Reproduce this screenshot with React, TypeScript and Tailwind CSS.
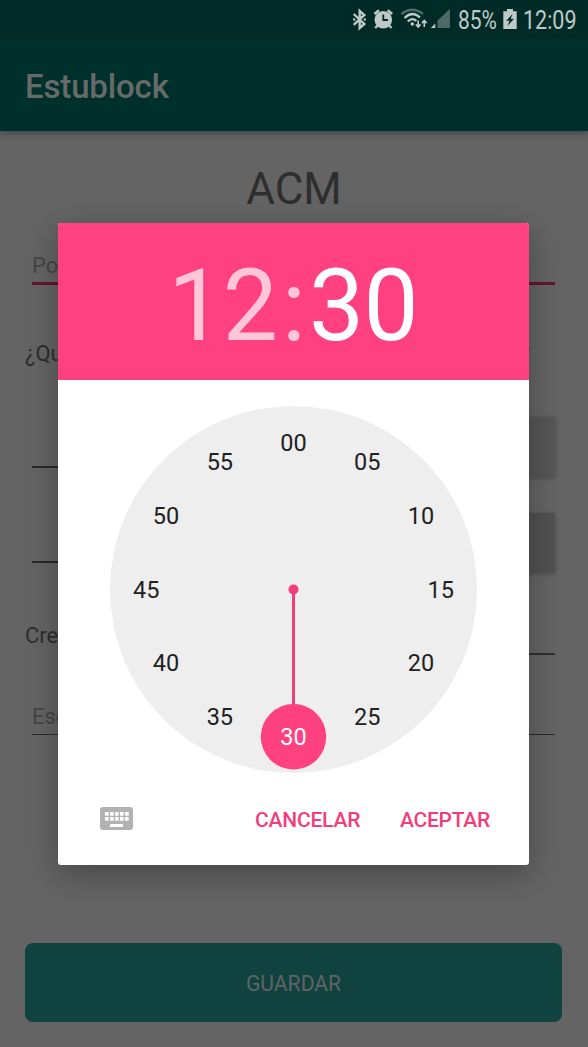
import React from 'react';

const minutes = ['00', '05', '10', '15', '20', '25', '30', '35', '40', '45', '50', '55'];

function StatusBar() {
  return (
    <div className="relative h-[39px] bg-[#002a26] text-[#bfcac8]">
      <svg className="absolute inset-0" width="588" height="39" viewBox="0 0 588 39" fill="none">
        <path d="M353.7 14 L364.3 24 L359.7 28 V11 L364.3 15 L353.7 24.8" stroke="#bfcac8" strokeWidth="2.4" />
        <path d="M353 19.5 H355.3 M363.7 19.5 H366" stroke="#bfcac8" strokeWidth="2.2" />
        <circle cx="383.3" cy="19.7" r="8.8" fill="#bfcac8" />
        <path d="M374.4 14 L379 10.2 M387.6 10.2 L392.2 14" stroke="#bfcac8" strokeWidth="2.4" />
        <path d="M377.5 25.5 L375.2 28 M389.2 25.5 L391.5 28" stroke="#bfcac8" strokeWidth="2.4" />
        <path d="M383.3 14.5 V20 H388" stroke="#002a26" strokeWidth="1.8" />
        <path d="M401.5 14 Q412.2 5.5 423 14" stroke="#506c69" strokeWidth="2.6" />
        <path d="M404.5 18 Q412.2 10.4 420 17.5 M407.8 21.5 Q412.2 17 416.5 21" stroke="#bfcac8" strokeWidth="2.3" />
        <circle cx="412.3" cy="24" r="1.8" fill="#bfcac8" />
        <path d="M418.2 20.5 V27 M415.8 24.4 L418.2 27 L420.6 24.4 M424.3 27 V20.5 M421.9 23.1 L424.3 20.5 L426.7 23.1" stroke="#bfcac8" strokeWidth="1.6" />
        <path d="M450 8.7 V28 H437.5 V20.5 Z" fill="#4d6966" />
        <path d="M435.3 23.5 V28 H430.8 Z" fill="#bfcac8" />
        <path d="M507 9 H513 V11.2 H516.7 V29 H503.3 V11.2 H507 Z" fill="#bfcac8" />
        <path d="M512.5 14 L506.2 20.7 H509.5 L507.5 26 L514 18.8 H510.7 Z" fill="#002a26" />
      </svg>
      <span className="absolute top-[6px] left-[458px] origin-left scale-x-[0.84] text-[25px] leading-[30px]">85%</span>
      <span className="absolute top-[6px] left-[523px] origin-left scale-x-[0.86] text-[25px] leading-[30px]">12:09</span>
    </div>
  );
}

function Form() {
  return (
    <main className="flex flex-col text-[22px] leading-[26px] text-[#2e2e2e]">
      <h2 className="mt-[32px] h-[52px] text-center text-[44px] leading-[52px]">ACM</h2>
      <div className="mx-8 mt-[37px] h-[33px] w-[523px] border-b-[3px] border-[#63152f] pt-px text-[#454545]">Po</div>
      <div className="mt-[56px] ml-[25px] flex h-[26px] w-[505px] items-center justify-between">
        <span>¿Qu</span>
        <i className="mb-[9px] h-px w-[2px] bg-[#303030]" />
      </div>
      <div className="mt-[50px] mr-[33px] ml-8 flex h-[61px] justify-between">
        <div className="h-[51px] w-[350px] border-b-2 border-[#292929]" />
        <div className="h-[60px] w-[150px] rounded-[2px] bg-[#565656] shadow-[0_1px_4px_rgba(0,0,0,0.25)]" />
      </div>
      <div className="mt-[34px] mr-[33px] ml-8 flex h-[61px] justify-between">
        <div className="h-[51px] w-[350px] border-b-2 border-[#292929]" />
        <div className="mt-px h-[60px] w-[150px] rounded-[2px] bg-[#515151] shadow-[0_1px_4px_rgba(0,0,0,0.25)]" />
      </div>
      <div className="mt-[50px] mr-[33px] ml-[25px] flex h-[32px] justify-between">
        <span>Cre</span>
        <div className="w-[350px] border-b-2 border-[#303030]" />
      </div>
      <div className="mt-[49px] mr-[33px] ml-8 h-[31px] border-b-[1.5px] border-[#292929] text-[#454545]">Esc</div>
      <button className="mx-[25px] mt-[208px] h-[79px] w-[537px] rounded-[8px] bg-[#10423f] pt-[2px] text-[22px] text-[#5f6463]">
        <span className="inline-block scale-x-[0.96]">GUARDAR</span>
      </button>
    </main>
  );
}

function ClockFace() {
  return (
    <svg width="367" height="367" viewBox="0 0 367 367" className="mx-auto mt-[26px] block">
      <circle cx="183.5" cy="183.5" r="183.5" fill="#eeeeee" />
      <path d="M183.5 183.5 V300" stroke="#f33d7b" strokeWidth="3" />
      <circle cx="183.5" cy="183.5" r="5" fill="#f33d7b" />
      <circle cx="183.5" cy="330.8" r="32.7" fill="#ff4081" />
      {minutes.map((label, i) => (
        <text
          key={label}
          x={183.5 + 147.3 * Math.sin((i * Math.PI) / 6)}
          y={183.5 - 147.3 * Math.cos((i * Math.PI) / 6) + 8.3}
          textAnchor="middle"
          fontSize="23.5"
          fill={label === '30' ? '#ffffff' : '#212121'}
        >
          {label}
        </text>
      ))}
    </svg>
  );
}

function TimeDialog() {
  return (
    <section className="absolute top-[223px] left-[58px] flex h-[641.5px] w-[471px] flex-col rounded-[3px] bg-white shadow-[0_9px_32px_rgba(0,0,0,0.3)]">
      <header className="flex h-[157px] justify-center rounded-t-[3px] bg-[#ff4081] pt-[24px] text-[100px] leading-[117px] tracking-[-0.5px] text-white">
        <span className="flex w-[113px] justify-end pr-[1px] text-[#ffc5d8]"><span className="inline-block origin-right scale-x-[0.98]">12</span></span>
        <span className="w-[30px] text-center text-[#ffc5d8]">:</span>
        <span className="w-[113px]"><span className="inline-block origin-left scale-x-[0.98]">30</span></span>
      </header>
      <ClockFace />
      <footer className="mt-[34px] flex h-[26px] items-center text-[21px] font-medium text-[#f33d7b]">
        <svg className="-mt-[3px] ml-[42px]" width="33" height="23" viewBox="0 0 33 23">
          <rect width="33" height="23" rx="3" fill="#b2b2b2" />
          {[5, 10].map((y) =>
            [5, 10, 15, 20, 25].map((x) => <rect key={`${x}-${y}`} x={x} y={y} width="3.7" height="3.7" fill="white" />)
          )}
          <rect x="10" y="17" width="13" height="3" fill="white" />
        </svg>
        <button className="mt-[2px] ml-[122px] w-[106px] text-left tracking-[-0.2px]">CANCELAR</button>
        <button className="mt-[2px] ml-[39px] tracking-[-0.25px]">ACEPTAR</button>
      </footer>
    </section>
  );
}

export default function App() {
  return (
    <div className="relative h-[1047px] w-[588px] overflow-hidden bg-[#646464] font-[Roboto,sans-serif]">
      <StatusBar />
      <header className="flex h-[92px] items-center bg-[#00302b] pt-[4px] pl-[25px] shadow-[0_2px_7px_rgba(0,0,0,0.35)]">
        <h1 className="text-[33px] font-medium tracking-[-0.15px] text-[#666b6a]">Estublock</h1>
      </header>
      <Form />
      <TimeDialog />
    </div>
  );
}
